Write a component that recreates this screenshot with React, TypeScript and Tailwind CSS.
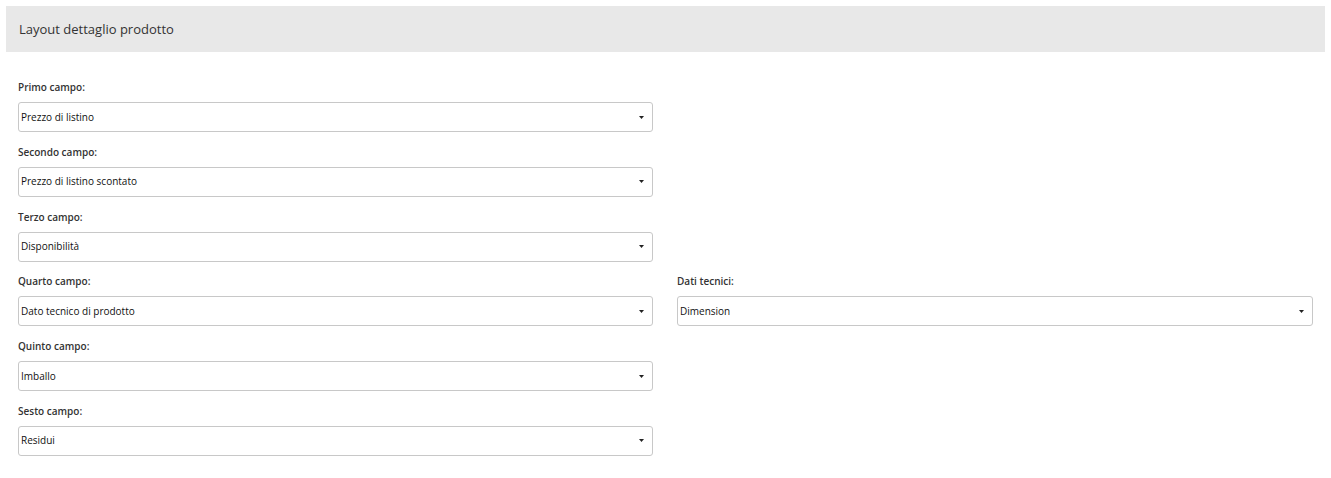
import React from 'react'

const font = { fontFamily: '"Open Sans", "Noto Sans", sans-serif' }

function Caret() {
  return (
    <svg width="5" height="3" viewBox="0 0 5 3" className="shrink-0">
      <path d="M0 0 H5 L2.5 3 Z" fill="#222" />
    </svg>
  )
}

function Field({ label, value }: { label: string; value: string }) {
  return (
    <div className="flex flex-col">
      <div className="h-[14px] text-[10px] leading-[14px] font-semibold text-[#333]">{label}</div>
      <div className="mt-2 h-[30px] flex items-center justify-between border border-[#c8c8c8] rounded-[3px] bg-white pl-[2px] pr-[8px]">
        <span className="text-[10px] text-[#111]">{value}</span>
        <Caret />
      </div>
    </div>
  )
}

export default function App() {
  return (
    <div className="min-h-screen bg-white pt-[6px] px-[6px]" style={font}>
      <div className="h-[46px] bg-[#e8e8e8] flex items-center pl-[13px] pt-[2px]">
        <h1 className="text-[13px] text-[#333] font-normal">Layout dettaglio prodotto</h1>
      </div>
      <div className="px-3 pt-[28px] grid grid-cols-[635px_636px] gap-x-6 gap-y-[12.8px]">
        <Field label="Primo campo:" value="Prezzo di listino" />
        <div />
        <Field label="Secondo campo:" value="Prezzo di listino scontato" />
        <div />
        <Field label="Terzo campo:" value="Disponibilità" />
        <div />
        <Field label="Quarto campo:" value="Dato tecnico di prodotto" />
        <Field label="Dati tecnici:" value="Dimension" />
        <Field label="Quinto campo:" value="Imballo" />
        <div />
        <Field label="Sesto campo:" value="Residui" />
        <div />
      </div>
    </div>
  )
}
